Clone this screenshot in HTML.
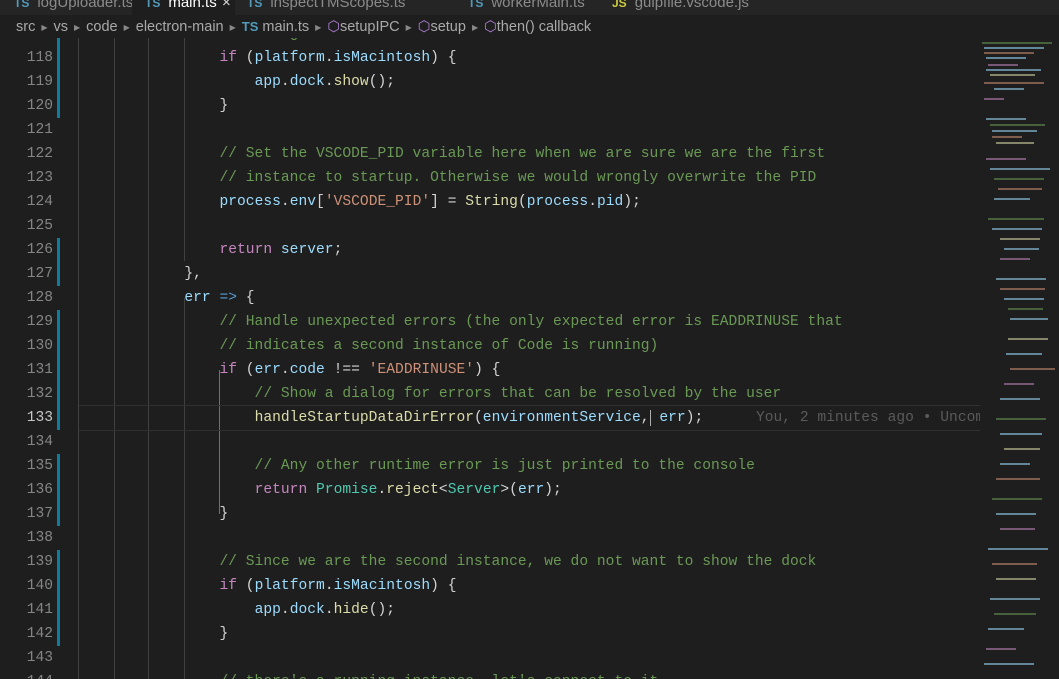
<!DOCTYPE html>
<html><head><meta charset="utf-8"><style>
*{margin:0;padding:0;box-sizing:border-box}
body{width:1059px;height:679px;overflow:hidden;background:#1e1e1e;font-family:"Liberation Sans",sans-serif;position:relative}
.tabs{position:absolute;top:0;left:0;width:1059px;height:15px;background:#252526;overflow:hidden}
.tab{position:absolute;top:-9px;height:24px;font-size:15px;color:#8b8b8b;line-height:24px;white-space:nowrap}
.tab b{color:#519aba;font-size:12px;font-weight:bold;margin-right:8px}
.crumb{position:absolute;top:15px;left:0;width:1059px;height:23px;background:#1e1e1e;font-size:14.5px;color:#a9a9a9;line-height:23px;padding-left:16px;white-space:nowrap;z-index:3}
.crumb i{font-style:normal;font-size:8px;color:#888;margin:0 6px;vertical-align:1px}
.crumb .ts{color:#519aba;font-weight:bold;font-size:13px}
.crumb .cb{color:#b180d7}
.code{position:absolute;top:34px;left:0;width:980px;height:645px;overflow:hidden;font-family:"Liberation Mono",monospace;font-size:14.6px;letter-spacing:0.02px}
.ln{position:absolute;left:0;width:53px;text-align:right;color:#858585;height:24px;line-height:24px;letter-spacing:0}
.tx{position:absolute;left:79px;white-space:pre;color:#d4d4d4;height:24px;line-height:24px}
.g{position:absolute;width:1px;background:#404040}
.bar{position:absolute;left:57px;width:3px;background:#0c7d9d}
.k{color:#c586c0}.v{color:#9cdcfe}.f{color:#dcdcaa}.c{color:#6a9955}.s{color:#ce9178}.t{color:#4ec9b0}.b{color:#569cd6}
</style></head><body>
<div class="tabs">
<div class="tab" style="left:0;width:130px;padding-left:14px"><b>TS</b>logUploader.ts</div>
<div class="tab" style="left:132px;width:103px;background:#1e1e1e;color:#fff;padding-left:13px"><b>TS</b>main.ts<span style="position:absolute;left:90px;color:#ddd">×</span></div>
<div class="tab" style="left:247px"><b>TS</b>inspectTMScopes.ts</div>
<div class="tab" style="left:468px"><b>TS</b>workerMain.ts</div>
<div class="tab" style="left:612px"><b style="color:#cbcb41">JS</b>gulpfile.vscode.js</div>
</div>
<div class="crumb">src<i>▶</i>vs<i>▶</i>code<i>▶</i>electron-main<i>▶</i><span class="ts">TS</span> main.ts<i>▶</i><span class="cb">⬡</span>setupIPC<i>▶</i><span class="cb">⬡</span>setup<i>▶</i><span class="cb">⬡</span>then() callback</div>
<div class="code">
<div class="g" style="left:78px;top:0;height:645px"></div>
<div class="g" style="left:114px;top:0;height:645px"></div>
<div class="g" style="left:148px;top:0;height:645px"></div>
<div class="g" style="left:184px;top:0;height:227px"></div>
<div class="g" style="left:184px;top:264px;height:381px"></div>
<div class="g" style="left:219px;top:336px;height:144px;background:#707070"></div>
<div class="bar" style="top:0;height:84px"></div>
<div class="bar" style="top:204px;height:48px"></div>
<div class="bar" style="top:276px;height:120px"></div>
<div class="bar" style="top:420px;height:72px"></div>
<div class="bar" style="top:516px;height:96px"></div>
<div style="position:absolute;left:79px;top:371px;width:901px;height:26px;border-top:1px solid #303030;border-bottom:1px solid #303030"></div>

<div class="ln" style="top:-12px">117</div><div class="tx c" style="top:-12px">                // Configure the initial state</div>
<div class="ln" style="top:12px">118</div><div class="tx" style="top:12px">                <span class="k">if</span> (<span class="v">platform</span>.<span class="v">isMacintosh</span>) {</div>
<div class="ln" style="top:36px">119</div><div class="tx" style="top:36px">                    <span class="v">app</span>.<span class="v">dock</span>.<span class="f">show</span>();</div>
<div class="ln" style="top:60px">120</div><div class="tx" style="top:60px">                }</div>
<div class="ln" style="top:84px">121</div>
<div class="ln" style="top:108px">122</div><div class="tx c" style="top:108px">                // Set the VSCODE_PID variable here when we are sure we are the first</div>
<div class="ln" style="top:132px">123</div><div class="tx c" style="top:132px">                // instance to startup. Otherwise we would wrongly overwrite the PID</div>
<div class="ln" style="top:156px">124</div><div class="tx" style="top:156px">                <span class="v">process</span>.<span class="v">env</span>[<span class="s">'VSCODE_PID'</span>] = <span class="f">String</span>(<span class="v">process</span>.<span class="v">pid</span>);</div>
<div class="ln" style="top:180px">125</div>
<div class="ln" style="top:204px">126</div><div class="tx" style="top:204px">                <span class="k">return</span> <span class="v">server</span>;</div>
<div class="ln" style="top:228px">127</div><div class="tx" style="top:228px">            },</div>
<div class="ln" style="top:252px">128</div><div class="tx" style="top:252px">            <span class="v">err</span> <span class="b">=&gt;</span> {</div>
<div class="ln" style="top:276px">129</div><div class="tx c" style="top:276px">                // Handle unexpected errors (the only expected error is EADDRINUSE that</div>
<div class="ln" style="top:300px">130</div><div class="tx c" style="top:300px">                // indicates a second instance of Code is running)</div>
<div class="ln" style="top:324px">131</div><div class="tx" style="top:324px">                <span class="k">if</span> (<span class="v">err</span>.<span class="v">code</span> !== <span class="s">'EADDRINUSE'</span>) {</div>
<div class="ln" style="top:348px">132</div><div class="tx c" style="top:348px">                    // Show a dialog for errors that can be resolved by the user</div>
<div class="ln" style="top:372px;color:#c6c6c6">133</div><div class="tx" style="top:372px">                    <span class="f">handleStartupDataDirError</span>(<span class="v">environmentService</span>,<span style="border-left:1px solid #aeafad"> </span><span class="v">err</span>);      <span style="color:#5a5a5a">You, 2 minutes ago • Uncommitted</span></div>
<div class="ln" style="top:396px">134</div>
<div class="ln" style="top:420px">135</div><div class="tx c" style="top:420px">                    // Any other runtime error is just printed to the console</div>
<div class="ln" style="top:444px">136</div><div class="tx" style="top:444px">                    <span class="k">return</span> <span class="t">Promise</span>.<span class="f">reject</span>&lt;<span class="t">Server</span>&gt;(<span class="v">err</span>);</div>
<div class="ln" style="top:468px">137</div><div class="tx" style="top:468px">                }</div>
<div class="ln" style="top:492px">138</div>
<div class="ln" style="top:516px">139</div><div class="tx c" style="top:516px">                // Since we are the second instance, we do not want to show the dock</div>
<div class="ln" style="top:540px">140</div><div class="tx" style="top:540px">                <span class="k">if</span> (<span class="v">platform</span>.<span class="v">isMacintosh</span>) {</div>
<div class="ln" style="top:564px">141</div><div class="tx" style="top:564px">                    <span class="v">app</span>.<span class="v">dock</span>.<span class="f">hide</span>();</div>
<div class="ln" style="top:588px">142</div><div class="tx" style="top:588px">                }</div>
<div class="ln" style="top:612px">143</div>
<div class="ln" style="top:636px">144</div><div class="tx c" style="top:636px">                // there's a running instance, let's connect to it</div>
</div>
<svg style="position:absolute;left:980px;top:38px" width="79" height="641">
<g opacity="0.55">
<rect x="2" y="4" width="70" height="2" fill="#6a9955"/><rect x="4" y="9" width="60" height="2" fill="#9cdcfe"/><rect x="4" y="14" width="50" height="2" fill="#ce9178"/><rect x="6" y="19" width="40" height="2" fill="#9cdcfe"/><rect x="8" y="26" width="30" height="2" fill="#c586c0"/><rect x="6" y="31" width="55" height="2" fill="#9cdcfe"/><rect x="10" y="36" width="45" height="2" fill="#dcdcaa"/><rect x="4" y="44" width="60" height="2" fill="#ce9178"/><rect x="14" y="50" width="30" height="2" fill="#9cdcfe"/><rect x="4" y="60" width="20" height="2" fill="#c586c0"/>
<rect x="6" y="80" width="40" height="2" fill="#9cdcfe"/><rect x="10" y="86" width="55" height="2" fill="#6a9955"/><rect x="12" y="92" width="45" height="2" fill="#9cdcfe"/><rect x="12" y="98" width="30" height="2" fill="#ce9178"/><rect x="16" y="104" width="38" height="2" fill="#dcdcaa"/><rect x="6" y="120" width="40" height="2" fill="#c586c0"/><rect x="10" y="130" width="60" height="2" fill="#9cdcfe"/><rect x="14" y="140" width="50" height="2" fill="#6a9955"/><rect x="18" y="150" width="44" height="2" fill="#ce9178"/><rect x="14" y="160" width="36" height="2" fill="#9cdcfe"/>
<rect x="8" y="180" width="56" height="2" fill="#6a9955"/><rect x="12" y="190" width="50" height="2" fill="#9cdcfe"/><rect x="20" y="200" width="40" height="2" fill="#dcdcaa"/><rect x="24" y="210" width="35" height="2" fill="#9cdcfe"/><rect x="20" y="220" width="30" height="2" fill="#c586c0"/><rect x="16" y="240" width="50" height="2" fill="#9cdcfe"/><rect x="20" y="250" width="45" height="2" fill="#ce9178"/><rect x="24" y="260" width="40" height="2" fill="#9cdcfe"/><rect x="28" y="270" width="35" height="2" fill="#6a9955"/><rect x="30" y="280" width="38" height="2" fill="#9cdcfe"/>
<rect x="28" y="300" width="40" height="2" fill="#dcdcaa"/><rect x="26" y="315" width="36" height="2" fill="#9cdcfe"/><rect x="30" y="330" width="45" height="2" fill="#ce9178"/><rect x="24" y="345" width="30" height="2" fill="#c586c0"/><rect x="20" y="360" width="40" height="2" fill="#9cdcfe"/><rect x="16" y="380" width="50" height="2" fill="#6a9955"/><rect x="20" y="395" width="42" height="2" fill="#9cdcfe"/><rect x="24" y="410" width="36" height="2" fill="#dcdcaa"/><rect x="20" y="425" width="30" height="2" fill="#9cdcfe"/><rect x="16" y="440" width="44" height="2" fill="#ce9178"/>
<rect x="12" y="460" width="50" height="2" fill="#6a9955"/><rect x="16" y="475" width="40" height="2" fill="#9cdcfe"/><rect x="20" y="490" width="35" height="2" fill="#c586c0"/><rect x="8" y="510" width="60" height="2" fill="#9cdcfe"/><rect x="12" y="525" width="45" height="2" fill="#ce9178"/><rect x="16" y="540" width="40" height="2" fill="#dcdcaa"/><rect x="10" y="560" width="50" height="2" fill="#9cdcfe"/><rect x="14" y="575" width="42" height="2" fill="#6a9955"/><rect x="8" y="590" width="36" height="2" fill="#9cdcfe"/><rect x="6" y="610" width="30" height="2" fill="#c586c0"/><rect x="4" y="625" width="50" height="2" fill="#9cdcfe"/>
</g></svg>
</body></html>
